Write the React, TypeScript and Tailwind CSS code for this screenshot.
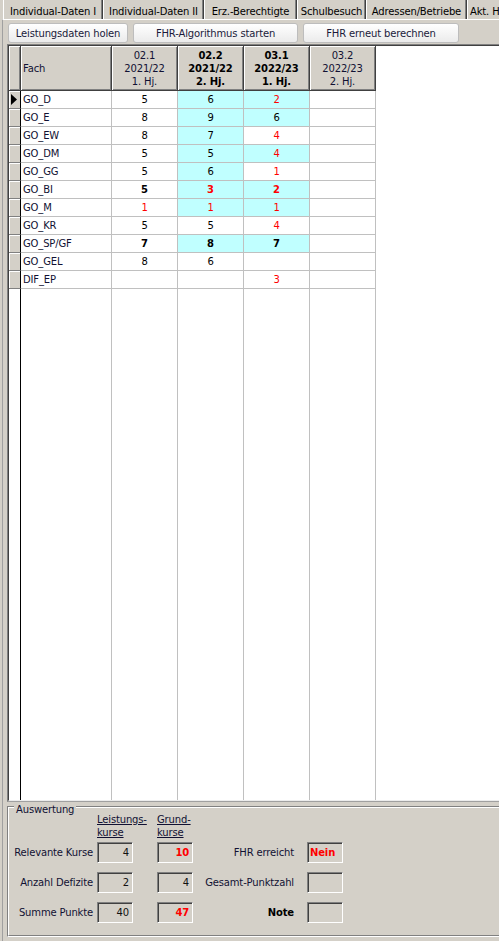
import React from "react";

type Cell = { v: string; red?: boolean; bold?: boolean; cyan?: boolean };

const rows: { fach: string; cells: Cell[] }[] = [
  { fach: "GO_D", cells: [{ v: "5" }, { v: "6", cyan: true }, { v: "2", red: true, cyan: true }, { v: "" }] },
  { fach: "GO_E", cells: [{ v: "8" }, { v: "9", cyan: true }, { v: "6", cyan: true }, { v: "" }] },
  { fach: "GO_EW", cells: [{ v: "8" }, { v: "7", cyan: true }, { v: "4", red: true }, { v: "" }] },
  { fach: "GO_DM", cells: [{ v: "5" }, { v: "5", cyan: true }, { v: "4", red: true, cyan: true }, { v: "" }] },
  { fach: "GO_GG", cells: [{ v: "5" }, { v: "6", cyan: true }, { v: "1", red: true }, { v: "" }] },
  {
    fach: "GO_BI",
    cells: [{ v: "5", bold: true }, { v: "3", red: true, bold: true, cyan: true }, { v: "2", red: true, bold: true, cyan: true }, { v: "" }],
  },
  { fach: "GO_M", cells: [{ v: "1", red: true }, { v: "1", red: true, cyan: true }, { v: "1", red: true, cyan: true }, { v: "" }] },
  { fach: "GO_KR", cells: [{ v: "5" }, { v: "5" }, { v: "4", red: true }, { v: "" }] },
  {
    fach: "GO_SP/GF",
    cells: [{ v: "7", bold: true }, { v: "8", bold: true, cyan: true }, { v: "7", bold: true, cyan: true }, { v: "" }],
  },
  { fach: "GO_GEL", cells: [{ v: "8" }, { v: "6" }, { v: "" }, { v: "" }] },
  { fach: "DIF_EP", cells: [{ v: "" }, { v: "" }, { v: "3", red: true }, { v: "" }] },
];

const heads = [
  { l: ["02.1", "2021/22", "1. Hj."], bold: false },
  { l: ["02.2", "2021/22", "2. Hj."], bold: true },
  { l: ["03.1", "2022/23", "1. Hj."], bold: true },
  { l: ["03.2", "2022/23", "2. Hj."], bold: false },
];

const tabs = [
  { t: "Individual-Daten I", w: "w-[100px]" },
  { t: "Individual-Daten II", w: "w-[101px]" },
  { t: "Erz.-Berechtigte", w: "w-[93px]" },
  { t: "Schulbesuch", w: "w-[69px]" },
  { t: "Adressen/Betriebe", w: "w-[101px]" },
];

const headCell =
  "h-full shrink-0 bg-[#d4d0c8] border-r border-b border-[#404040] shadow-[inset_1px_1px_0_#fff,inset_-1px_-1px_0_#808080]";

function Box({ v, red, left }: { v?: string; red?: boolean; left?: boolean }) {
  return (
    <div
      className={`w-[36px] h-[21px] shrink-0 flex items-center border border-t-[#808080] border-l-[#808080] border-b-white border-r-white shadow-[inset_1px_1px_0_#404040] ${
        left ? "justify-start pl-[2px]" : "justify-end pr-[3px]"
      } ${red ? "text-[#ff0000] font-bold" : "text-[#111]"}`}
    >
      {v}
    </div>
  );
}

function EvalRow({ label, b, c, label2, bold2, d }: { label: string; b: React.ReactNode; c: React.ReactNode; label2: string; bold2?: boolean; d: React.ReactNode }) {
  return (
    <div className="flex items-center h-[21px]">
      <div className="w-[84px] text-right whitespace-nowrap">{label}</div>
      <div className="ml-[4px]">{b}</div>
      <div className="ml-[24px]">{c}</div>
      <div className={`w-[101px] text-right whitespace-nowrap ${bold2 ? "font-bold text-black" : ""}`}>{label2}</div>
      <div className="ml-[13px]">{d}</div>
    </div>
  );
}

export default function App() {
  return (
    <div className="w-[499px] h-[941px] overflow-hidden bg-[#d4d0c8] flex flex-col font-['DejaVu_Sans',sans-serif] text-[10px] tracking-[-0.15px] text-black leading-[13px]">
      {/* Tabs */}
      <div className="h-[19px] flex pl-[3px] shrink-0">
        {tabs.map((t) => (
          <div
            key={t.t}
            className={`${t.w} h-full shrink-0 flex items-center justify-center pt-[3px] whitespace-nowrap border-l border-l-white border-r border-r-[#404040] shadow-[inset_-1px_0_0_#808080]`}
          >
            {t.t}
          </div>
        ))}
        <div className="w-[32px] h-full shrink-0 flex items-center pl-[2px] pt-[3px] whitespace-nowrap border-l border-l-white">
          Akt. H
        </div>
      </div>

      {/* Tab sheet */}
      <div className="flex-1 flex flex-col ml-[2px] border-l border-t border-l-[#a0a0a0] border-t-white">
        {/* Buttons */}
        <div className="flex mt-[3px] ml-[5px] gap-[5px] text-[#1a1a3a]">
          <button className="w-[120px] h-[20px] rounded-[3px] border border-[#bdbdbd] bg-linear-to-b from-white to-[#ebebeb] flex items-center justify-center">
            Leistungsdaten holen
          </button>
          <button className="w-[165px] h-[20px] rounded-[3px] border border-[#bdbdbd] bg-linear-to-b from-white to-[#ebebeb] flex items-center justify-center">
            FHR-Algorithmus starten
          </button>
          <button className="w-[156px] h-[20px] rounded-[3px] border border-[#bdbdbd] bg-linear-to-b from-white to-[#ebebeb] flex items-center justify-center">
            FHR erneut berechnen
          </button>
        </div>

        {/* Grid */}
        <div className="mt-[1px] ml-[4px] w-[500px] h-[758px] shrink-0 border-t border-l border-b border-t-[#808080] border-l-[#808080] border-b-[#a0a0a0]">
          <div className="h-full flex flex-col bg-white border-t border-l border-b border-t-[#404040] border-l-[#404040] border-b-[#ececec]">
            {/* Header */}
            <div className="flex h-[45px] shrink-0">
              <div className={`${headCell} w-[12px]`} />
              <div className={`${headCell} w-[91px] flex items-center pl-[2px] text-[#111133]`}>Fach</div>
              {heads.map((h) => (
                <div
                  key={h.l[0]}
                  className={`${headCell} w-[66px] flex flex-col items-center justify-center ${h.bold ? "font-bold text-black" : "text-[#111133]"}`}
                >
                  {h.l.map((s) => (
                    <span key={s}>{s}</span>
                  ))}
                </div>
              ))}
              <div className="flex-1" />
            </div>

            {/* Rows */}
            {rows.map((r, i) => (
              <div key={r.fach} className="flex h-[18px] shrink-0">
                <div className="w-[12px] shrink-0 bg-[#d4d0c8] border-r border-r-black border-b border-b-[#808080] shadow-[inset_1px_1px_0_#fff] flex items-center pl-[2px]">
                  {i === 0 && (
                    <svg width="6" height="11" viewBox="0 0 6 11">
                      <path d="M0 0 L6 5.5 L0 11 Z" fill="#000" />
                    </svg>
                  )}
                </div>
                <div className="w-[91px] shrink-0 border-r border-b border-[#c0c0c0] flex items-center pl-[2px] text-[#111133]">
                  {r.fach}
                </div>
                {r.cells.map((c, j) => (
                  <div
                    key={j}
                    className={`w-[66px] shrink-0 border-r border-b border-[#c0c0c0] flex items-center justify-center ${
                      c.cyan ? "bg-[#c0ffff]" : "bg-white"
                    } ${c.red ? "text-[#ff0000]" : "text-black"} ${c.bold ? "font-bold" : ""}`}
                  >
                    {c.v}
                  </div>
                ))}
                <div className="flex-1" />
              </div>
            ))}

            {/* Filler */}
            <div className="flex flex-1">
              <div className="w-[12px] shrink-0 border-r border-r-black" />
              <div className="w-[91px] shrink-0 border-r border-[#c0c0c0]" />
              <div className="w-[66px] shrink-0 border-r border-[#c0c0c0]" />
              <div className="w-[66px] shrink-0 border-r border-[#c0c0c0]" />
              <div className="w-[66px] shrink-0 border-r border-[#c0c0c0]" />
              <div className="w-[66px] shrink-0 border-r border-[#c0c0c0]" />
            </div>
          </div>
        </div>

        {/* Auswertung */}
        <div className="relative mt-[4px] ml-[4px] w-[500px] h-[131px] shrink-0 border border-t-[#808080] border-l-[#808080] border-b-white border-r-white">
          <div className="h-full border border-t-white border-l-white border-b-[#808080] border-r-[#808080] pt-[5px] text-[#111133]">
            <div className="flex">
              <div className="w-[88px] shrink-0" />
              <div className="w-[60px] shrink-0 flex flex-col items-start">
                <span className="underline">Leistungs-</span>
                <span className="underline">kurse</span>
              </div>
              <div className="flex flex-col items-start">
                <span className="underline">Grund-</span>
                <span className="underline">kurse</span>
              </div>
            </div>
            <div className="mt-[3px] flex flex-col gap-[9px]">
              <EvalRow label="Relevante Kurse" b={<Box v="4" />} c={<Box v="10" red />} label2="FHR erreicht" d={<Box v="Nein" red left />} />
              <EvalRow label="Anzahl Defizite" b={<Box v="2" />} c={<Box v="4" />} label2="Gesamt-Punktzahl" d={<Box />} />
              <EvalRow label="Summe Punkte" b={<Box v="40" />} c={<Box v="47" red />} label2="Note" bold2 d={<Box />} />
            </div>
          </div>
          <span className="absolute left-[6px] top-[-4px] px-[2px] bg-[#d4d0c8] text-[#111133]">Auswertung</span>
        </div>
      </div>
    </div>
  );
}
